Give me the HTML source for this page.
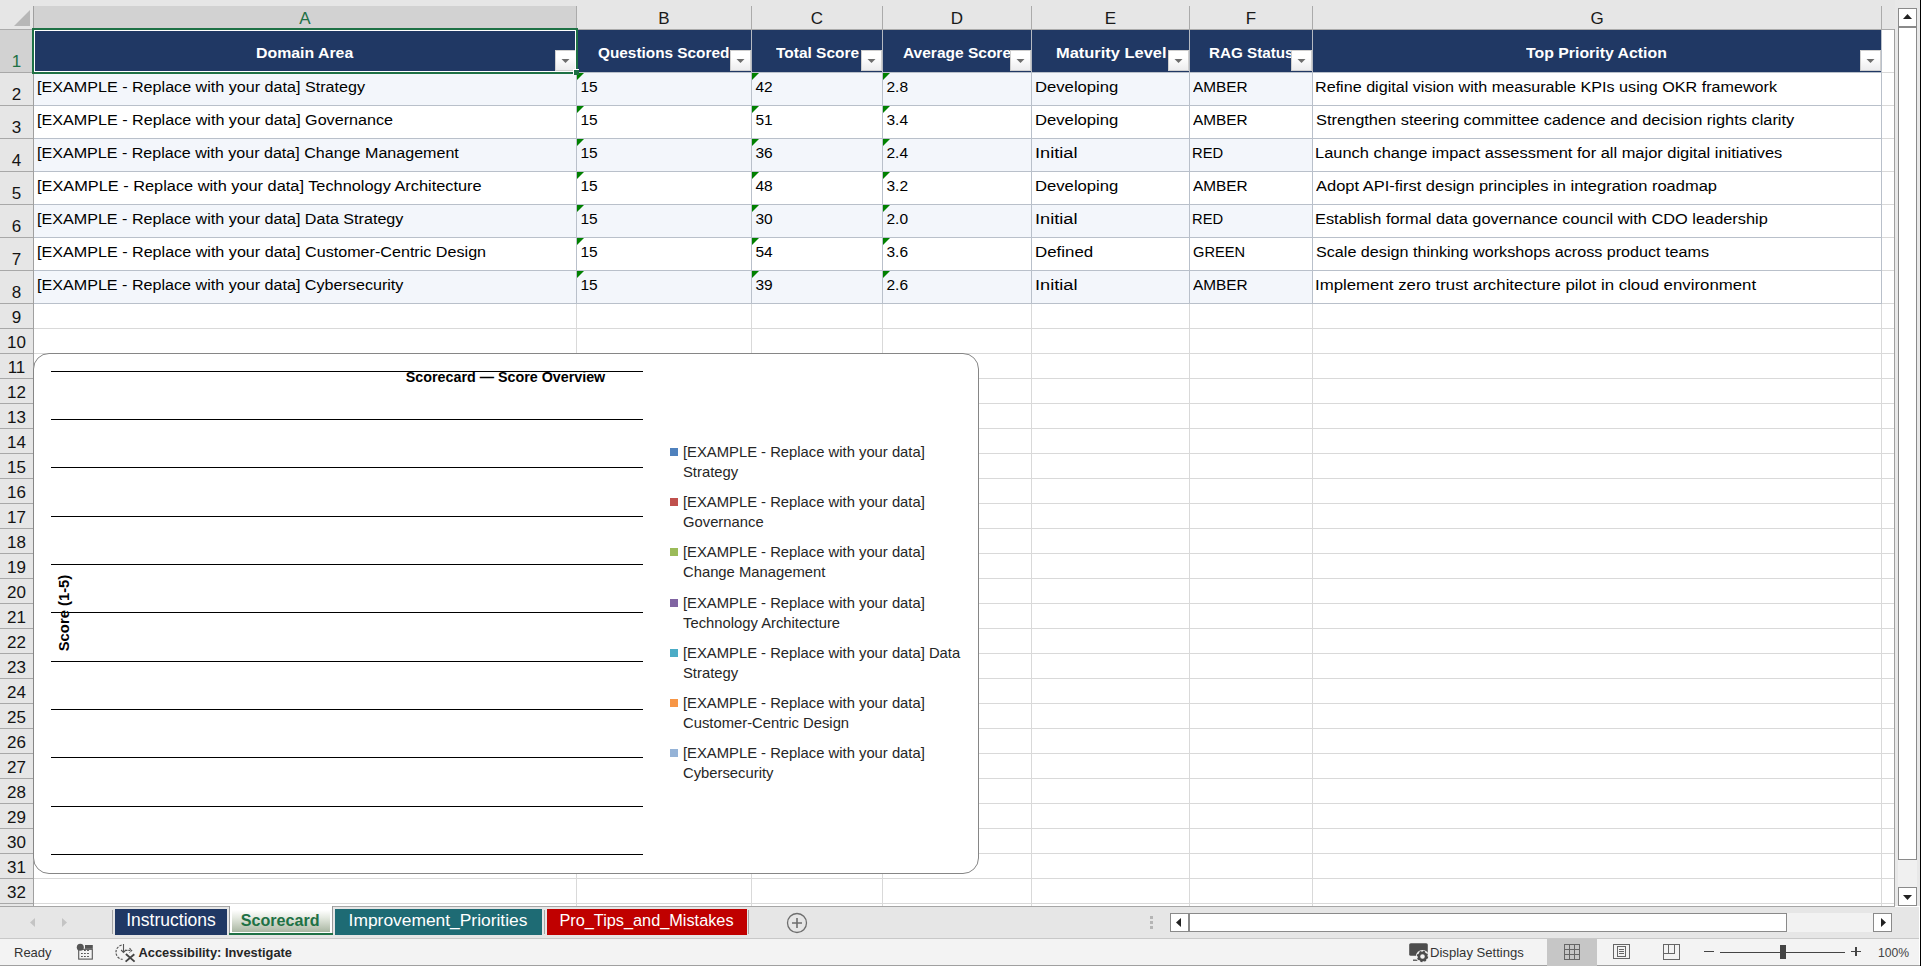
<!DOCTYPE html>
<html><head><meta charset="utf-8"><style>
html,body{margin:0;padding:0;width:1921px;height:966px;overflow:hidden;background:#fff}
body>div,body>svg{position:absolute}
.t{white-space:nowrap;font-family:"Liberation Sans",sans-serif}
</style></head><body>
<div style="left:0px;top:0px;width:1921px;height:966px;background:#fff"></div>
<div style="left:0px;top:0px;width:1919px;height:29px;background:#e6e6e6"></div>
<div style="left:1895px;top:0px;width:25px;height:906px;background:#e8e8e8"></div>
<div style="left:34px;top:73px;width:1278px;height:32px;background:#f3f6fb"></div>
<div style="left:34px;top:139px;width:1278px;height:32px;background:#f3f6fb"></div>
<div style="left:34px;top:205px;width:1278px;height:32px;background:#f3f6fb"></div>
<div style="left:34px;top:271px;width:1278px;height:32px;background:#f3f6fb"></div>
<div style="left:34px;top:328px;width:1860px;height:1px;background:#d9d9d9"></div>
<div style="left:34px;top:353px;width:1860px;height:1px;background:#d9d9d9"></div>
<div style="left:34px;top:378px;width:1860px;height:1px;background:#d9d9d9"></div>
<div style="left:34px;top:403px;width:1860px;height:1px;background:#d9d9d9"></div>
<div style="left:34px;top:428px;width:1860px;height:1px;background:#d9d9d9"></div>
<div style="left:34px;top:453px;width:1860px;height:1px;background:#d9d9d9"></div>
<div style="left:34px;top:478px;width:1860px;height:1px;background:#d9d9d9"></div>
<div style="left:34px;top:503px;width:1860px;height:1px;background:#d9d9d9"></div>
<div style="left:34px;top:528px;width:1860px;height:1px;background:#d9d9d9"></div>
<div style="left:34px;top:553px;width:1860px;height:1px;background:#d9d9d9"></div>
<div style="left:34px;top:578px;width:1860px;height:1px;background:#d9d9d9"></div>
<div style="left:34px;top:603px;width:1860px;height:1px;background:#d9d9d9"></div>
<div style="left:34px;top:628px;width:1860px;height:1px;background:#d9d9d9"></div>
<div style="left:34px;top:653px;width:1860px;height:1px;background:#d9d9d9"></div>
<div style="left:34px;top:678px;width:1860px;height:1px;background:#d9d9d9"></div>
<div style="left:34px;top:703px;width:1860px;height:1px;background:#d9d9d9"></div>
<div style="left:34px;top:728px;width:1860px;height:1px;background:#d9d9d9"></div>
<div style="left:34px;top:753px;width:1860px;height:1px;background:#d9d9d9"></div>
<div style="left:34px;top:778px;width:1860px;height:1px;background:#d9d9d9"></div>
<div style="left:34px;top:803px;width:1860px;height:1px;background:#d9d9d9"></div>
<div style="left:34px;top:828px;width:1860px;height:1px;background:#d9d9d9"></div>
<div style="left:34px;top:853px;width:1860px;height:1px;background:#d9d9d9"></div>
<div style="left:34px;top:878px;width:1860px;height:1px;background:#d9d9d9"></div>
<div style="left:34px;top:903px;width:1860px;height:1px;background:#d9d9d9"></div>
<div style="left:576px;top:304px;width:1px;height:602px;background:#d9d9d9"></div>
<div style="left:751px;top:304px;width:1px;height:602px;background:#d9d9d9"></div>
<div style="left:882px;top:304px;width:1px;height:602px;background:#d9d9d9"></div>
<div style="left:1031px;top:304px;width:1px;height:602px;background:#d9d9d9"></div>
<div style="left:1189px;top:304px;width:1px;height:602px;background:#d9d9d9"></div>
<div style="left:1312px;top:304px;width:1px;height:602px;background:#d9d9d9"></div>
<div style="left:1881px;top:304px;width:1px;height:602px;background:#d9d9d9"></div>
<div style="left:34px;top:72px;width:1847px;height:1px;background:#b9c0ca"></div>
<div style="left:34px;top:105px;width:1847px;height:1px;background:#b9c0ca"></div>
<div style="left:34px;top:138px;width:1847px;height:1px;background:#b9c0ca"></div>
<div style="left:34px;top:171px;width:1847px;height:1px;background:#b9c0ca"></div>
<div style="left:34px;top:204px;width:1847px;height:1px;background:#b9c0ca"></div>
<div style="left:34px;top:237px;width:1847px;height:1px;background:#b9c0ca"></div>
<div style="left:34px;top:270px;width:1847px;height:1px;background:#b9c0ca"></div>
<div style="left:34px;top:303px;width:1847px;height:1px;background:#b9c0ca"></div>
<div style="left:1882px;top:72px;width:12px;height:1px;background:#d9d9d9"></div>
<div style="left:1882px;top:105px;width:12px;height:1px;background:#d9d9d9"></div>
<div style="left:1882px;top:138px;width:12px;height:1px;background:#d9d9d9"></div>
<div style="left:1882px;top:171px;width:12px;height:1px;background:#d9d9d9"></div>
<div style="left:1882px;top:204px;width:12px;height:1px;background:#d9d9d9"></div>
<div style="left:1882px;top:237px;width:12px;height:1px;background:#d9d9d9"></div>
<div style="left:1882px;top:270px;width:12px;height:1px;background:#d9d9d9"></div>
<div style="left:1882px;top:303px;width:12px;height:1px;background:#d9d9d9"></div>
<div style="left:576px;top:73px;width:1px;height:230px;background:#b9c0ca"></div>
<div style="left:751px;top:73px;width:1px;height:230px;background:#b9c0ca"></div>
<div style="left:882px;top:73px;width:1px;height:230px;background:#b9c0ca"></div>
<div style="left:1031px;top:73px;width:1px;height:230px;background:#b9c0ca"></div>
<div style="left:1189px;top:73px;width:1px;height:230px;background:#b9c0ca"></div>
<div style="left:1312px;top:73px;width:1px;height:230px;background:#b9c0ca"></div>
<div style="left:1881px;top:30px;width:1px;height:274px;background:#b9c0ca"></div>
<div style="left:1894px;top:29px;width:1px;height:877px;background:#a0a0a0"></div>
<div style="left:34px;top:30px;width:1847px;height:42px;background:#203864"></div>
<div style="left:576px;top:30px;width:1px;height:42px;background:#b4b9c2"></div>
<div style="left:751px;top:30px;width:1px;height:42px;background:#b4b9c2"></div>
<div style="left:882px;top:30px;width:1px;height:42px;background:#b4b9c2"></div>
<div style="left:1031px;top:30px;width:1px;height:42px;background:#b4b9c2"></div>
<div style="left:1189px;top:30px;width:1px;height:42px;background:#b4b9c2"></div>
<div style="left:1312px;top:30px;width:1px;height:42px;background:#b4b9c2"></div>
<div style="left:34px;top:6px;width:542px;height:23px;background:#d2d2d2"></div>
<div style="left:576px;top:6px;width:1px;height:23px;background:#ababab"></div>
<div style="left:751px;top:6px;width:1px;height:23px;background:#ababab"></div>
<div style="left:882px;top:6px;width:1px;height:23px;background:#ababab"></div>
<div style="left:1031px;top:6px;width:1px;height:23px;background:#ababab"></div>
<div style="left:1189px;top:6px;width:1px;height:23px;background:#ababab"></div>
<div style="left:1312px;top:6px;width:1px;height:23px;background:#ababab"></div>
<div style="left:1881px;top:6px;width:1px;height:23px;background:#ababab"></div>
<div style="left:0px;top:29px;width:1894px;height:1px;background:#ababab"></div>
<div style="left:33px;top:6px;width:1px;height:900px;background:#a0a0a0"></div>
<div class="t" style="left:275.00px;width:60px;text-align:center;top:9px;font-size:17px;line-height:20px;color:#1e7145">A</div>
<div class="t" style="left:634.00px;width:60px;text-align:center;top:9px;font-size:17px;line-height:20px;color:#1a1a1a">B</div>
<div class="t" style="left:787.00px;width:60px;text-align:center;top:9px;font-size:17px;line-height:20px;color:#1a1a1a">C</div>
<div class="t" style="left:927.00px;width:60px;text-align:center;top:9px;font-size:17px;line-height:20px;color:#1a1a1a">D</div>
<div class="t" style="left:1080.50px;width:60px;text-align:center;top:9px;font-size:17px;line-height:20px;color:#1a1a1a">E</div>
<div class="t" style="left:1221.00px;width:60px;text-align:center;top:9px;font-size:17px;line-height:20px;color:#1a1a1a">F</div>
<div class="t" style="left:1567.00px;width:60px;text-align:center;top:9px;font-size:17px;line-height:20px;color:#1a1a1a">G</div>
<svg style="position:absolute;left:0;top:0" width="33" height="29"><polygon points="14,26 30,26 30,10" fill="#b7b7b7"/></svg>
<div style="left:0px;top:30px;width:33px;height:876px;background:#e6e6e6"></div>
<div style="left:0px;top:30px;width:33px;height:42px;background:#d2d2d2"></div>
<div style="left:0px;top:72px;width:33px;height:1px;background:#a8a8a8"></div>
<div style="left:0px;top:105px;width:33px;height:1px;background:#a8a8a8"></div>
<div style="left:0px;top:138px;width:33px;height:1px;background:#a8a8a8"></div>
<div style="left:0px;top:171px;width:33px;height:1px;background:#a8a8a8"></div>
<div style="left:0px;top:204px;width:33px;height:1px;background:#a8a8a8"></div>
<div style="left:0px;top:237px;width:33px;height:1px;background:#a8a8a8"></div>
<div style="left:0px;top:270px;width:33px;height:1px;background:#a8a8a8"></div>
<div style="left:0px;top:303px;width:33px;height:1px;background:#a8a8a8"></div>
<div style="left:0px;top:328px;width:33px;height:1px;background:#a8a8a8"></div>
<div style="left:0px;top:353px;width:33px;height:1px;background:#a8a8a8"></div>
<div style="left:0px;top:378px;width:33px;height:1px;background:#a8a8a8"></div>
<div style="left:0px;top:403px;width:33px;height:1px;background:#a8a8a8"></div>
<div style="left:0px;top:428px;width:33px;height:1px;background:#a8a8a8"></div>
<div style="left:0px;top:453px;width:33px;height:1px;background:#a8a8a8"></div>
<div style="left:0px;top:478px;width:33px;height:1px;background:#a8a8a8"></div>
<div style="left:0px;top:503px;width:33px;height:1px;background:#a8a8a8"></div>
<div style="left:0px;top:528px;width:33px;height:1px;background:#a8a8a8"></div>
<div style="left:0px;top:553px;width:33px;height:1px;background:#a8a8a8"></div>
<div style="left:0px;top:578px;width:33px;height:1px;background:#a8a8a8"></div>
<div style="left:0px;top:603px;width:33px;height:1px;background:#a8a8a8"></div>
<div style="left:0px;top:628px;width:33px;height:1px;background:#a8a8a8"></div>
<div style="left:0px;top:653px;width:33px;height:1px;background:#a8a8a8"></div>
<div style="left:0px;top:678px;width:33px;height:1px;background:#a8a8a8"></div>
<div style="left:0px;top:703px;width:33px;height:1px;background:#a8a8a8"></div>
<div style="left:0px;top:728px;width:33px;height:1px;background:#a8a8a8"></div>
<div style="left:0px;top:753px;width:33px;height:1px;background:#a8a8a8"></div>
<div style="left:0px;top:778px;width:33px;height:1px;background:#a8a8a8"></div>
<div style="left:0px;top:803px;width:33px;height:1px;background:#a8a8a8"></div>
<div style="left:0px;top:828px;width:33px;height:1px;background:#a8a8a8"></div>
<div style="left:0px;top:853px;width:33px;height:1px;background:#a8a8a8"></div>
<div style="left:0px;top:878px;width:33px;height:1px;background:#a8a8a8"></div>
<div style="left:0px;top:903px;width:33px;height:1px;background:#a8a8a8"></div>
<div class="t" style="left:-3.50px;width:40px;text-align:center;top:52px;font-size:17px;line-height:20px;color:#1e7145">1</div>
<div class="t" style="left:-3.50px;width:40px;text-align:center;top:85px;font-size:17px;line-height:20px;color:#141414">2</div>
<div class="t" style="left:-3.50px;width:40px;text-align:center;top:118px;font-size:17px;line-height:20px;color:#141414">3</div>
<div class="t" style="left:-3.50px;width:40px;text-align:center;top:151px;font-size:17px;line-height:20px;color:#141414">4</div>
<div class="t" style="left:-3.50px;width:40px;text-align:center;top:184px;font-size:17px;line-height:20px;color:#141414">5</div>
<div class="t" style="left:-3.50px;width:40px;text-align:center;top:217px;font-size:17px;line-height:20px;color:#141414">6</div>
<div class="t" style="left:-3.50px;width:40px;text-align:center;top:250px;font-size:17px;line-height:20px;color:#141414">7</div>
<div class="t" style="left:-3.50px;width:40px;text-align:center;top:283px;font-size:17px;line-height:20px;color:#141414">8</div>
<div class="t" style="left:-3.50px;width:40px;text-align:center;top:308px;font-size:17px;line-height:20px;color:#141414">9</div>
<div class="t" style="left:-3.50px;width:40px;text-align:center;top:333px;font-size:17px;line-height:20px;color:#141414">10</div>
<div class="t" style="left:-3.50px;width:40px;text-align:center;top:358px;font-size:17px;line-height:20px;color:#141414">11</div>
<div class="t" style="left:-3.50px;width:40px;text-align:center;top:383px;font-size:17px;line-height:20px;color:#141414">12</div>
<div class="t" style="left:-3.50px;width:40px;text-align:center;top:408px;font-size:17px;line-height:20px;color:#141414">13</div>
<div class="t" style="left:-3.50px;width:40px;text-align:center;top:433px;font-size:17px;line-height:20px;color:#141414">14</div>
<div class="t" style="left:-3.50px;width:40px;text-align:center;top:458px;font-size:17px;line-height:20px;color:#141414">15</div>
<div class="t" style="left:-3.50px;width:40px;text-align:center;top:483px;font-size:17px;line-height:20px;color:#141414">16</div>
<div class="t" style="left:-3.50px;width:40px;text-align:center;top:508px;font-size:17px;line-height:20px;color:#141414">17</div>
<div class="t" style="left:-3.50px;width:40px;text-align:center;top:533px;font-size:17px;line-height:20px;color:#141414">18</div>
<div class="t" style="left:-3.50px;width:40px;text-align:center;top:558px;font-size:17px;line-height:20px;color:#141414">19</div>
<div class="t" style="left:-3.50px;width:40px;text-align:center;top:583px;font-size:17px;line-height:20px;color:#141414">20</div>
<div class="t" style="left:-3.50px;width:40px;text-align:center;top:608px;font-size:17px;line-height:20px;color:#141414">21</div>
<div class="t" style="left:-3.50px;width:40px;text-align:center;top:633px;font-size:17px;line-height:20px;color:#141414">22</div>
<div class="t" style="left:-3.50px;width:40px;text-align:center;top:658px;font-size:17px;line-height:20px;color:#141414">23</div>
<div class="t" style="left:-3.50px;width:40px;text-align:center;top:683px;font-size:17px;line-height:20px;color:#141414">24</div>
<div class="t" style="left:-3.50px;width:40px;text-align:center;top:708px;font-size:17px;line-height:20px;color:#141414">25</div>
<div class="t" style="left:-3.50px;width:40px;text-align:center;top:733px;font-size:17px;line-height:20px;color:#141414">26</div>
<div class="t" style="left:-3.50px;width:40px;text-align:center;top:758px;font-size:17px;line-height:20px;color:#141414">27</div>
<div class="t" style="left:-3.50px;width:40px;text-align:center;top:783px;font-size:17px;line-height:20px;color:#141414">28</div>
<div class="t" style="left:-3.50px;width:40px;text-align:center;top:808px;font-size:17px;line-height:20px;color:#141414">29</div>
<div class="t" style="left:-3.50px;width:40px;text-align:center;top:833px;font-size:17px;line-height:20px;color:#141414">30</div>
<div class="t" style="left:-3.50px;width:40px;text-align:center;top:858px;font-size:17px;line-height:20px;color:#141414">31</div>
<div class="t" style="left:-3.50px;width:40px;text-align:center;top:883px;font-size:17px;line-height:20px;color:#141414">32</div>
<div class="t" style="left:255.88px;top:43px;font-size:15.5px;line-height:19px;color:#fff;font-weight:bold;transform:scaleX(1.0233);transform-origin:0 0">Domain Area</div>
<div class="t" style="left:598.2px;top:43px;font-size:15.5px;line-height:19px;color:#fff;font-weight:bold;transform:scaleX(0.9904);transform-origin:0 0">Questions Scored</div>
<div class="t" style="left:775.5px;top:43px;font-size:15.5px;line-height:19px;color:#fff;font-weight:bold;transform:scaleX(0.9983);transform-origin:0 0">Total Score</div>
<div class="t" style="left:902.8px;top:43px;font-size:15.5px;line-height:19px;color:#fff;font-weight:bold;transform:scaleX(1.0003);transform-origin:0 0">Average Score</div>
<div class="t" style="left:1055.74px;top:43px;font-size:15.5px;line-height:19px;color:#fff;font-weight:bold;transform:scaleX(1.0610);transform-origin:0 0">Maturity Level</div>
<div class="t" style="left:1208.52px;top:43px;font-size:15.5px;line-height:19px;color:#fff;font-weight:bold;transform:scaleX(0.9822);transform-origin:0 0">RAG Status</div>
<div class="t" style="left:1526.2px;top:43px;font-size:15.5px;line-height:19px;color:#fff;font-weight:bold;transform:scaleX(1.0226);transform-origin:0 0">Top Priority Action</div>
<div style="left:555px;top:50px;width:21px;height:21px;background:linear-gradient(#fff 35%,#ececee);border:1px solid #cfcfcf;box-sizing:border-box"></div>
<svg style="position:absolute;left:555px;top:50px" width="21" height="21"><polygon points="6.5,9 14.5,9 10.5,13" fill="#6d6d6d"/></svg>
<div style="left:730px;top:50px;width:21px;height:21px;background:linear-gradient(#fff 35%,#ececee);border:1px solid #cfcfcf;box-sizing:border-box"></div>
<svg style="position:absolute;left:730px;top:50px" width="21" height="21"><polygon points="6.5,9 14.5,9 10.5,13" fill="#6d6d6d"/></svg>
<div style="left:861px;top:50px;width:21px;height:21px;background:linear-gradient(#fff 35%,#ececee);border:1px solid #cfcfcf;box-sizing:border-box"></div>
<svg style="position:absolute;left:861px;top:50px" width="21" height="21"><polygon points="6.5,9 14.5,9 10.5,13" fill="#6d6d6d"/></svg>
<div style="left:1010px;top:50px;width:21px;height:21px;background:linear-gradient(#fff 35%,#ececee);border:1px solid #cfcfcf;box-sizing:border-box"></div>
<svg style="position:absolute;left:1010px;top:50px" width="21" height="21"><polygon points="6.5,9 14.5,9 10.5,13" fill="#6d6d6d"/></svg>
<div style="left:1168px;top:50px;width:21px;height:21px;background:linear-gradient(#fff 35%,#ececee);border:1px solid #cfcfcf;box-sizing:border-box"></div>
<svg style="position:absolute;left:1168px;top:50px" width="21" height="21"><polygon points="6.5,9 14.5,9 10.5,13" fill="#6d6d6d"/></svg>
<div style="left:1291px;top:50px;width:21px;height:21px;background:linear-gradient(#fff 35%,#ececee);border:1px solid #cfcfcf;box-sizing:border-box"></div>
<svg style="position:absolute;left:1291px;top:50px" width="21" height="21"><polygon points="6.5,9 14.5,9 10.5,13" fill="#6d6d6d"/></svg>
<div style="left:1860px;top:50px;width:21px;height:21px;background:linear-gradient(#fff 35%,#ececee);border:1px solid #cfcfcf;box-sizing:border-box"></div>
<svg style="position:absolute;left:1860px;top:50px" width="21" height="21"><polygon points="6.5,9 14.5,9 10.5,13" fill="#6d6d6d"/></svg>
<div class="t" style="left:36.96px;top:77px;font-size:15.5px;line-height:19px;color:#000;transform:scaleX(1.0402);transform-origin:0 0">[EXAMPLE - Replace with your data] Strategy</div>
<div class="t" style="left:580.5px;top:77px;font-size:15.5px;line-height:19px;color:#000">15</div>
<div class="t" style="left:755.5px;top:77px;font-size:15.5px;line-height:19px;color:#000">42</div>
<div class="t" style="left:886.5px;top:77px;font-size:15.5px;line-height:19px;color:#000">2.8</div>
<div class="t" style="left:1034.73px;top:77px;font-size:15.5px;line-height:19px;color:#000;transform:scaleX(1.0746);transform-origin:0 0">Developing</div>
<div class="t" style="left:1193.3px;top:77px;font-size:15.5px;line-height:19px;color:#000;transform:scaleX(0.9922);transform-origin:0 0">AMBER</div>
<div class="t" style="left:1315.36px;top:77px;font-size:15.5px;line-height:19px;color:#000;transform:scaleX(1.0413);transform-origin:0 0">Refine digital vision with measurable KPIs using OKR framework</div>
<svg style="position:absolute;left:577px;top:73px" width="8" height="8"><polygon points="0,0 7,0 0,7" fill="#008000"/></svg>
<svg style="position:absolute;left:752px;top:73px" width="8" height="8"><polygon points="0,0 7,0 0,7" fill="#008000"/></svg>
<svg style="position:absolute;left:883px;top:73px" width="8" height="8"><polygon points="0,0 7,0 0,7" fill="#008000"/></svg>
<div class="t" style="left:36.96px;top:110px;font-size:15.5px;line-height:19px;color:#000;transform:scaleX(1.0408);transform-origin:0 0">[EXAMPLE - Replace with your data] Governance</div>
<div class="t" style="left:580.5px;top:110px;font-size:15.5px;line-height:19px;color:#000">15</div>
<div class="t" style="left:755.5px;top:110px;font-size:15.5px;line-height:19px;color:#000">51</div>
<div class="t" style="left:886.5px;top:110px;font-size:15.5px;line-height:19px;color:#000">3.4</div>
<div class="t" style="left:1034.73px;top:110px;font-size:15.5px;line-height:19px;color:#000;transform:scaleX(1.0746);transform-origin:0 0">Developing</div>
<div class="t" style="left:1193.3px;top:110px;font-size:15.5px;line-height:19px;color:#000;transform:scaleX(0.9922);transform-origin:0 0">AMBER</div>
<div class="t" style="left:1316.4px;top:110px;font-size:15.5px;line-height:19px;color:#000;transform:scaleX(1.0573);transform-origin:0 0">Strengthen steering committee cadence and decision rights clarity</div>
<svg style="position:absolute;left:577px;top:106px" width="8" height="8"><polygon points="0,0 7,0 0,7" fill="#008000"/></svg>
<svg style="position:absolute;left:752px;top:106px" width="8" height="8"><polygon points="0,0 7,0 0,7" fill="#008000"/></svg>
<svg style="position:absolute;left:883px;top:106px" width="8" height="8"><polygon points="0,0 7,0 0,7" fill="#008000"/></svg>
<div class="t" style="left:36.96px;top:143px;font-size:15.5px;line-height:19px;color:#000;transform:scaleX(1.0373);transform-origin:0 0">[EXAMPLE - Replace with your data] Change Management</div>
<div class="t" style="left:580.5px;top:143px;font-size:15.5px;line-height:19px;color:#000">15</div>
<div class="t" style="left:755.5px;top:143px;font-size:15.5px;line-height:19px;color:#000">36</div>
<div class="t" style="left:886.5px;top:143px;font-size:15.5px;line-height:19px;color:#000">2.4</div>
<div class="t" style="left:1034.63px;top:143px;font-size:15.5px;line-height:19px;color:#000;transform:scaleX(1.1744);transform-origin:0 0">Initial</div>
<div class="t" style="left:1192.35px;top:143px;font-size:15.5px;line-height:19px;color:#000;transform:scaleX(0.9514);transform-origin:0 0">RED</div>
<div class="t" style="left:1315.34px;top:143px;font-size:15.5px;line-height:19px;color:#000;transform:scaleX(1.0594);transform-origin:0 0">Launch change impact assessment for all major digital initiatives</div>
<svg style="position:absolute;left:577px;top:139px" width="8" height="8"><polygon points="0,0 7,0 0,7" fill="#008000"/></svg>
<svg style="position:absolute;left:752px;top:139px" width="8" height="8"><polygon points="0,0 7,0 0,7" fill="#008000"/></svg>
<svg style="position:absolute;left:883px;top:139px" width="8" height="8"><polygon points="0,0 7,0 0,7" fill="#008000"/></svg>
<div class="t" style="left:36.95px;top:176px;font-size:15.5px;line-height:19px;color:#000;transform:scaleX(1.0539);transform-origin:0 0">[EXAMPLE - Replace with your data] Technology Architecture</div>
<div class="t" style="left:580.5px;top:176px;font-size:15.5px;line-height:19px;color:#000">15</div>
<div class="t" style="left:755.5px;top:176px;font-size:15.5px;line-height:19px;color:#000">48</div>
<div class="t" style="left:886.5px;top:176px;font-size:15.5px;line-height:19px;color:#000">3.2</div>
<div class="t" style="left:1034.73px;top:176px;font-size:15.5px;line-height:19px;color:#000;transform:scaleX(1.0746);transform-origin:0 0">Developing</div>
<div class="t" style="left:1193.3px;top:176px;font-size:15.5px;line-height:19px;color:#000;transform:scaleX(0.9922);transform-origin:0 0">AMBER</div>
<div class="t" style="left:1316.4px;top:176px;font-size:15.5px;line-height:19px;color:#000;transform:scaleX(1.0625);transform-origin:0 0">Adopt API-first design principles in integration roadmap</div>
<svg style="position:absolute;left:577px;top:172px" width="8" height="8"><polygon points="0,0 7,0 0,7" fill="#008000"/></svg>
<svg style="position:absolute;left:752px;top:172px" width="8" height="8"><polygon points="0,0 7,0 0,7" fill="#008000"/></svg>
<svg style="position:absolute;left:883px;top:172px" width="8" height="8"><polygon points="0,0 7,0 0,7" fill="#008000"/></svg>
<div class="t" style="left:36.96px;top:209px;font-size:15.5px;line-height:19px;color:#000;transform:scaleX(1.0398);transform-origin:0 0">[EXAMPLE - Replace with your data] Data Strategy</div>
<div class="t" style="left:580.5px;top:209px;font-size:15.5px;line-height:19px;color:#000">15</div>
<div class="t" style="left:755.5px;top:209px;font-size:15.5px;line-height:19px;color:#000">30</div>
<div class="t" style="left:886.5px;top:209px;font-size:15.5px;line-height:19px;color:#000">2.0</div>
<div class="t" style="left:1034.63px;top:209px;font-size:15.5px;line-height:19px;color:#000;transform:scaleX(1.1744);transform-origin:0 0">Initial</div>
<div class="t" style="left:1192.35px;top:209px;font-size:15.5px;line-height:19px;color:#000;transform:scaleX(0.9514);transform-origin:0 0">RED</div>
<div class="t" style="left:1315.34px;top:209px;font-size:15.5px;line-height:19px;color:#000;transform:scaleX(1.0554);transform-origin:0 0">Establish formal data governance council with CDO leadership</div>
<svg style="position:absolute;left:577px;top:205px" width="8" height="8"><polygon points="0,0 7,0 0,7" fill="#008000"/></svg>
<svg style="position:absolute;left:752px;top:205px" width="8" height="8"><polygon points="0,0 7,0 0,7" fill="#008000"/></svg>
<svg style="position:absolute;left:883px;top:205px" width="8" height="8"><polygon points="0,0 7,0 0,7" fill="#008000"/></svg>
<div class="t" style="left:36.96px;top:242px;font-size:15.5px;line-height:19px;color:#000;transform:scaleX(1.0405);transform-origin:0 0">[EXAMPLE - Replace with your data] Customer-Centric Design</div>
<div class="t" style="left:580.5px;top:242px;font-size:15.5px;line-height:19px;color:#000">15</div>
<div class="t" style="left:755.5px;top:242px;font-size:15.5px;line-height:19px;color:#000">54</div>
<div class="t" style="left:886.5px;top:242px;font-size:15.5px;line-height:19px;color:#000">3.6</div>
<div class="t" style="left:1034.71px;top:242px;font-size:15.5px;line-height:19px;color:#000;transform:scaleX(1.0887);transform-origin:0 0">Defined</div>
<div class="t" style="left:1193.3px;top:242px;font-size:15.5px;line-height:19px;color:#000;transform:scaleX(0.9439);transform-origin:0 0">GREEN</div>
<div class="t" style="left:1316.4px;top:242px;font-size:15.5px;line-height:19px;color:#000;transform:scaleX(1.0416);transform-origin:0 0">Scale design thinking workshops across product teams</div>
<svg style="position:absolute;left:577px;top:238px" width="8" height="8"><polygon points="0,0 7,0 0,7" fill="#008000"/></svg>
<svg style="position:absolute;left:752px;top:238px" width="8" height="8"><polygon points="0,0 7,0 0,7" fill="#008000"/></svg>
<svg style="position:absolute;left:883px;top:238px" width="8" height="8"><polygon points="0,0 7,0 0,7" fill="#008000"/></svg>
<div class="t" style="left:36.96px;top:275px;font-size:15.5px;line-height:19px;color:#000;transform:scaleX(1.0399);transform-origin:0 0">[EXAMPLE - Replace with your data] Cybersecurity</div>
<div class="t" style="left:580.5px;top:275px;font-size:15.5px;line-height:19px;color:#000">15</div>
<div class="t" style="left:755.5px;top:275px;font-size:15.5px;line-height:19px;color:#000">39</div>
<div class="t" style="left:886.5px;top:275px;font-size:15.5px;line-height:19px;color:#000">2.6</div>
<div class="t" style="left:1034.63px;top:275px;font-size:15.5px;line-height:19px;color:#000;transform:scaleX(1.1744);transform-origin:0 0">Initial</div>
<div class="t" style="left:1193.3px;top:275px;font-size:15.5px;line-height:19px;color:#000;transform:scaleX(0.9922);transform-origin:0 0">AMBER</div>
<div class="t" style="left:1315.32px;top:275px;font-size:15.5px;line-height:19px;color:#000;transform:scaleX(1.0848);transform-origin:0 0">Implement zero trust architecture pilot in cloud environment</div>
<svg style="position:absolute;left:577px;top:271px" width="8" height="8"><polygon points="0,0 7,0 0,7" fill="#008000"/></svg>
<svg style="position:absolute;left:752px;top:271px" width="8" height="8"><polygon points="0,0 7,0 0,7" fill="#008000"/></svg>
<svg style="position:absolute;left:883px;top:271px" width="8" height="8"><polygon points="0,0 7,0 0,7" fill="#008000"/></svg>
<div style="left:32px;top:28px;width:546px;height:46px;border:2px solid #1e7145;box-sizing:border-box"></div>
<div style="left:34px;top:30px;width:542px;height:42px;border:1px solid #fff;box-sizing:border-box"></div>
<div style="left:573px;top:69px;width:6px;height:6px;background:#fff"></div>
<div style="left:574px;top:70px;width:5px;height:5px;background:#1e7145"></div>
<div style="left:33px;top:353px;width:946px;height:521px;border:1px solid #868686;border-radius:16px;background:#fff;box-sizing:border-box"></div>
<div style="left:51px;top:371px;width:592px;height:1px;background:#000"></div>
<div style="left:51px;top:419px;width:592px;height:1px;background:#000"></div>
<div style="left:51px;top:467px;width:592px;height:1px;background:#000"></div>
<div style="left:51px;top:516px;width:592px;height:1px;background:#000"></div>
<div style="left:51px;top:564px;width:592px;height:1px;background:#000"></div>
<div style="left:51px;top:612px;width:592px;height:1px;background:#000"></div>
<div style="left:51px;top:661px;width:592px;height:1px;background:#000"></div>
<div style="left:51px;top:709px;width:592px;height:1px;background:#000"></div>
<div style="left:51px;top:757px;width:592px;height:1px;background:#000"></div>
<div style="left:51px;top:806px;width:592px;height:1px;background:#000"></div>
<div style="left:51px;top:854px;width:592px;height:1px;background:#000"></div>
<div class="t" style="left:305.50px;width:400px;text-align:center;top:369px;font-size:14.3px;line-height:17px;color:#000;font-weight:bold">Scorecard — Score Overview</div>
<div class="t" style="left:19px;top:603.5px;width:90px;height:18px;line-height:18px;text-align:center;font-size:14.8px;font-weight:bold;color:#000;transform:rotate(-90deg);transform-origin:45px 9px">Score (1-5)</div>
<div style="left:670px;top:448px;width:8px;height:8px;background:#4f81bd"></div>
<div class="t" style="left:683px;top:443px;font-size:14.8px;line-height:18px;color:#262626">[EXAMPLE - Replace with your data]</div>
<div class="t" style="left:683px;top:463px;font-size:14.8px;line-height:18px;color:#262626">Strategy</div>
<div style="left:670px;top:498px;width:8px;height:8px;background:#c0504d"></div>
<div class="t" style="left:683px;top:493px;font-size:14.8px;line-height:18px;color:#262626">[EXAMPLE - Replace with your data]</div>
<div class="t" style="left:683px;top:513px;font-size:14.8px;line-height:18px;color:#262626">Governance</div>
<div style="left:670px;top:548px;width:8px;height:8px;background:#9bbb59"></div>
<div class="t" style="left:683px;top:543px;font-size:14.8px;line-height:18px;color:#262626">[EXAMPLE - Replace with your data]</div>
<div class="t" style="left:683px;top:563px;font-size:14.8px;line-height:18px;color:#262626">Change Management</div>
<div style="left:670px;top:599px;width:8px;height:8px;background:#8064a2"></div>
<div class="t" style="left:683px;top:594px;font-size:14.8px;line-height:18px;color:#262626">[EXAMPLE - Replace with your data]</div>
<div class="t" style="left:683px;top:614px;font-size:14.8px;line-height:18px;color:#262626">Technology Architecture</div>
<div style="left:670px;top:649px;width:8px;height:8px;background:#4bacc6"></div>
<div class="t" style="left:683px;top:644px;font-size:14.8px;line-height:18px;color:#262626">[EXAMPLE - Replace with your data] Data</div>
<div class="t" style="left:683px;top:664px;font-size:14.8px;line-height:18px;color:#262626">Strategy</div>
<div style="left:670px;top:699px;width:8px;height:8px;background:#f79646"></div>
<div class="t" style="left:683px;top:694px;font-size:14.8px;line-height:18px;color:#262626">[EXAMPLE - Replace with your data]</div>
<div class="t" style="left:683px;top:714px;font-size:14.8px;line-height:18px;color:#262626">Customer-Centric Design</div>
<div style="left:670px;top:749px;width:8px;height:8px;background:#95b3d7"></div>
<div class="t" style="left:683px;top:744px;font-size:14.8px;line-height:18px;color:#262626">[EXAMPLE - Replace with your data]</div>
<div class="t" style="left:683px;top:764px;font-size:14.8px;line-height:18px;color:#262626">Cybersecurity</div>
<div style="left:0px;top:906px;width:1895px;height:1px;background:#a6a6a6"></div>
<div style="left:0px;top:907px;width:1919px;height:31px;background:#e6e6e6"></div>
<div style="left:0px;top:938px;width:1919px;height:1px;background:#c8c8c8"></div>
<div style="left:0px;top:939px;width:1919px;height:27px;background:#f3f3f3"></div>
<div style="left:0px;top:965px;width:1921px;height:1px;background:#a0a0a0"></div>
<div style="left:1920px;top:0px;width:1px;height:966px;background:#000"></div>
<svg style="position:absolute;left:28px;top:917px" width="42" height="12"><polygon points="2,5.5 7,1 7,10" fill="#c4c4c4"/><polygon points="34,1 39,5.5 34,10" fill="#c4c4c4"/></svg>
<div style="left:112px;top:910px;width:1px;height:24px;background:#a6a6a6"></div>
<div style="left:115px;top:909px;width:112px;height:26px;background:#203864"></div>
<div class="t" style="left:71.00px;width:200px;text-align:center;top:910px;font-size:17.5px;line-height:21px;color:#fff">Instructions</div>
<div style="left:229px;top:906px;width:104px;height:29px;background:#fff;border-left:1px solid #9a9a9a;border-right:1px solid #9a9a9a;box-sizing:border-box"></div>
<div style="left:232px;top:910px;width:98px;height:22px;background:linear-gradient(#ffffff 0%,#e4e9e0 35%,#a9b6a2 100%)"></div>
<div style="left:229px;top:933px;width:104px;height:2px;background:#1e7145"></div>
<div class="t" style="left:180.20px;width:200px;text-align:center;top:911px;font-size:16.1px;line-height:19px;color:#1e7145;font-weight:bold">Scorecard</div>
<div style="left:335px;top:909px;width:207px;height:26px;background:#1e6b74"></div>
<div class="t" style="left:288.00px;width:300px;text-align:center;top:910px;font-size:17.4px;line-height:21px;color:#fff">Improvement_Priorities</div>
<div style="left:544px;top:910px;width:1px;height:24px;background:#a6a6a6"></div>
<div style="left:547px;top:909px;width:200px;height:26px;background:#c00000"></div>
<div class="t" style="left:496.50px;width:300px;text-align:center;top:910px;font-size:16.3px;line-height:20px;color:#fff">Pro_Tips_and_Mistakes</div>
<div style="left:748px;top:910px;width:1px;height:24px;background:#a6a6a6"></div>
<svg style="position:absolute;left:785px;top:911px" width="24" height="24"><circle cx="12" cy="12" r="9.5" fill="none" stroke="#6e6e6e" stroke-width="1.3"/><path d="M7 12H17M12 7V17" stroke="#6e6e6e" stroke-width="1.6"/></svg>
<div style="left:1150px;top:916px;width:3px;height:3px;background:#b5b5b5"></div>
<div style="left:1150px;top:921px;width:3px;height:3px;background:#b5b5b5"></div>
<div style="left:1150px;top:926px;width:3px;height:3px;background:#b5b5b5"></div>
<div style="left:1170px;top:913px;width:19px;height:19px;background:#fff;border:1px solid #8a8a8a;box-sizing:border-box"></div>
<svg style="position:absolute;left:1170px;top:913px" width="19" height="19"><polygon points="6,9.5 11,5 11,14" fill="#222"/></svg>
<div style="left:1189px;top:913px;width:598px;height:19px;background:#fff;border:1px solid #8a8a8a;box-sizing:border-box"></div>
<div style="left:1787px;top:913px;width:86px;height:19px;background:#f2f2f2"></div>
<div style="left:1873px;top:913px;width:19px;height:19px;background:#fff;border:1px solid #8a8a8a;box-sizing:border-box"></div>
<svg style="position:absolute;left:1873px;top:913px" width="19" height="19"><polygon points="8,5 13,9.5 8,14" fill="#222"/></svg>
<div style="left:1898px;top:8px;width:19px;height:19px;background:#fff;border:1px solid #8a8a8a;box-sizing:border-box"></div>
<svg style="position:absolute;left:1898px;top:8px" width="19" height="19"><polygon points="5,11 9.5,6 14,11" fill="#222"/></svg>
<div style="left:1898px;top:27px;width:19px;height:833px;background:#fff;border:1px solid #8a8a8a;box-sizing:border-box"></div>
<div style="left:1898px;top:860px;width:19px;height:27px;background:#f0f0f0"></div>
<div style="left:1898px;top:887px;width:19px;height:19px;background:#fff;border:1px solid #8a8a8a;box-sizing:border-box"></div>
<svg style="position:absolute;left:1898px;top:887px" width="19" height="19"><polygon points="5,8 14,8 9.5,13" fill="#222"/></svg>
<div class="t" style="left:14px;top:945px;font-size:13px;line-height:16px;color:#333">Ready</div>
<svg style="position:absolute;left:72px;top:940px" width="24" height="24"><rect x="6.7" y="9.3" width="13.6" height="9.8" fill="none" stroke="#555" stroke-width="1.1"/><rect x="13" y="5" width="7.8" height="3.8" fill="#555"/><circle cx="8.3" cy="7.3" r="3.5" fill="#555"/><path d="M12 10.4h1.8M15.1 10.4h1.8M9 13.5h1.8M12 13.5h1.8M15.1 13.5h1.8M9 16.5h1.8M12 16.5h1.8M15.1 16.5h1.8" stroke="#555" stroke-width="1.1"/></svg>
<svg style="position:absolute;left:112px;top:940px" width="26" height="26"><path d="M9.6 5.2A7.2 7.2 0 0 0 10.6 19.4" fill="none" stroke="#555" stroke-width="1.2" stroke-dasharray="2.4 1.2"/><path d="M11.5 4V12.3M9.1 10L11.5 12.4L13.9 10" fill="none" stroke="#555" stroke-width="1.1"/><path d="M13.5 10.4H19.6M17.5 8.2L19.7 10.4L17.5 12.6" fill="none" stroke="#555" stroke-width="1.1" stroke-dasharray="2 0.8"/><path d="M13.9 14L22.6 21.6M13.6 21.6L22.3 14.2" stroke="#444" stroke-width="1.9"/></svg>
<div class="t" style="left:138.5px;top:945px;font-size:12.85px;line-height:15px;color:#262626;font-weight:bold">Accessibility: Investigate</div>
<svg style="position:absolute;left:1405px;top:940px" width="28" height="24"><rect x="4.2" y="3.2" width="18.6" height="12.6" rx="1.6" fill="#4d4d4d"/><path d="M8 20.2H13" stroke="#4d4d4d" stroke-width="1.3"/><g transform="translate(17.5,16.5)"><circle r="6.6" fill="#f3f3f3"/><circle r="3.6" fill="none" stroke="#4d4d4d" stroke-width="2.6"/><circle r="4.9" fill="none" stroke="#4d4d4d" stroke-width="1.6" stroke-dasharray="1.9 1.95"/></g></svg>
<div class="t" style="left:1430px;top:945px;font-size:13.1px;line-height:16px;color:#333">Display Settings</div>
<div style="left:1547px;top:939px;width:50px;height:27px;background:#c6c6c6"></div>
<svg style="position:absolute;left:1563px;top:943px" width="19" height="19" shape-rendering="crispEdges"><path d="M1.5 1.5h15v15h-15zM6.5 1.5v15M11.5 1.5v15M1.5 6.5h15M1.5 11.5h15" fill="none" stroke="#666" stroke-width="1"/></svg>
<svg style="position:absolute;left:1612px;top:943px" width="19" height="19" shape-rendering="crispEdges"><path d="M1.5 1.5h16v14h-16z" fill="none" stroke="#666" stroke-width="1"/><path d="M5.5 3.5h8v10h-8z" fill="none" stroke="#666" stroke-width="1"/><path d="M7 6.5h5M7 8.5h5M7 10.5h5" stroke="#666" stroke-width="1"/></svg>
<svg style="position:absolute;left:1662px;top:943px" width="19" height="19" shape-rendering="crispEdges"><path d="M1.5 1.5h16v15h-16zM6.5 1.5v9M1.5 10.5h11V1.5" fill="none" stroke="#666" stroke-width="1"/></svg>
<div style="left:1704px;top:951px;width:10px;height:1.3px;background:#444"></div>
<div style="left:1720px;top:951.5px;width:125px;height:1.5px;background:#444"></div>
<div style="left:1780px;top:945px;width:6px;height:14px;background:#444"></div>
<div style="left:1851px;top:951px;width:10px;height:1.2px;background:#444"></div>
<div style="left:1855.4px;top:946.6px;width:1.2px;height:9.6px;background:#444"></div>
<div class="t" style="left:1878px;top:946px;font-size:12.2px;line-height:15px;color:#444">100%</div>
</body></html>
